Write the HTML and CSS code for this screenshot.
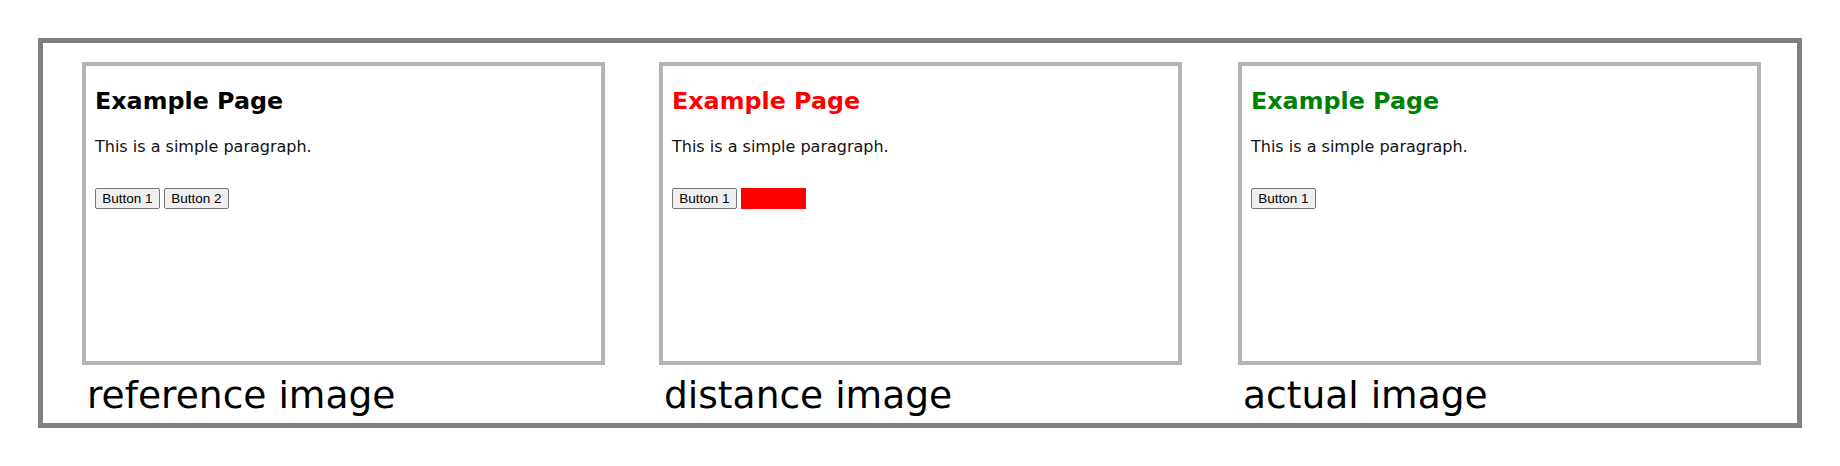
FILE: index.html
```html
<!DOCTYPE html>
<html lang="en">
<head>
<meta charset="utf-8">
<title>Comparison</title>
<link rel="stylesheet" href="styles.css">
</head>
<body>
  <div class="frame">
    <div class="column column-first">
      <div class="panel">
        <h1 class="title title-black">Example Page</h1>
        <p class="para">This is a simple paragraph.</p>
        <div class="buttons">
          <button class="btn">Button 1</button>
          <button class="btn">Button 2</button>
        </div>
      </div>
      <div class="label">reference image</div>
    </div>
    <div class="column column-second">
      <div class="panel">
        <h1 class="title title-red">Example Page</h1>
        <p class="para">This is a simple paragraph.</p>
        <div class="buttons">
          <button class="btn">Button 1</button>
          <span class="diff-box"></span>
        </div>
      </div>
      <div class="label">distance image</div>
    </div>
    <div class="column column-third">
      <div class="panel">
        <h1 class="title title-green">Example Page</h1>
        <p class="para">This is a simple paragraph.</p>
        <div class="buttons">
          <button class="btn">Button 1</button>
        </div>
      </div>
      <div class="label">actual image</div>
    </div>
  </div>
</body>
</html>
```

FILE: styles.css
```css
html, body {
  margin: 0;
  padding: 0;
  background: #ffffff;
}

body {
  padding: 38px;
  font-family: "DejaVu Sans", Verdana, sans-serif;
  color: #000;
}

.frame {
  border: 5px solid #808080;
  padding: 19px 36px 6px 39px;
  display: flex;
}

.column {
  width: 523px;
  display: flex;
  flex-direction: column;
}

.column-second {
  margin-left: 54px;
}

.column-third {
  margin-left: 56px;
}

.panel {
  box-sizing: border-box;
  width: 523px;
  height: 303px;
  border: 4px solid #b4b4b4;
  padding: 22px 9px 0 9px;
  background: #fff;
}

.title {
  margin: 0;
  font-family: "DejaVu Sans", Verdana, sans-serif;
  font-weight: bold;
  font-size: 23.8px;
  line-height: 27px;
}

.title-black { color: #000000; }
.title-red { color: #ff0000; }
.title-green { color: #008000; }

.para {
  margin: 22px 0 0 0;
  font-size: 16px;
  line-height: 19px;
  color: #111;
}

.buttons {
  margin-top: 32px;
  display: flex;
  gap: 4px;
  align-items: flex-start;
}

.btn {
  box-sizing: border-box;
  width: 65px;
  height: 21px;
  padding: 0 6px;
  margin: 0;
  font-family: "Liberation Sans", Arial, sans-serif;
  font-size: 13.5px;
  line-height: 19px;
  color: #000;
  background: #efefef;
  border: 1px solid #767676;
  border-radius: 2px;
}

.diff-box {
  display: block;
  width: 65px;
  height: 21px;
  background: #ff0000;
}

.label {
  margin-top: 9px;
  padding-left: 5px;
  font-family: "DejaVu Sans", Verdana, sans-serif;
  font-size: 37.6px;
  line-height: 43px;
  color: #000;
  white-space: nowrap;
}
```
